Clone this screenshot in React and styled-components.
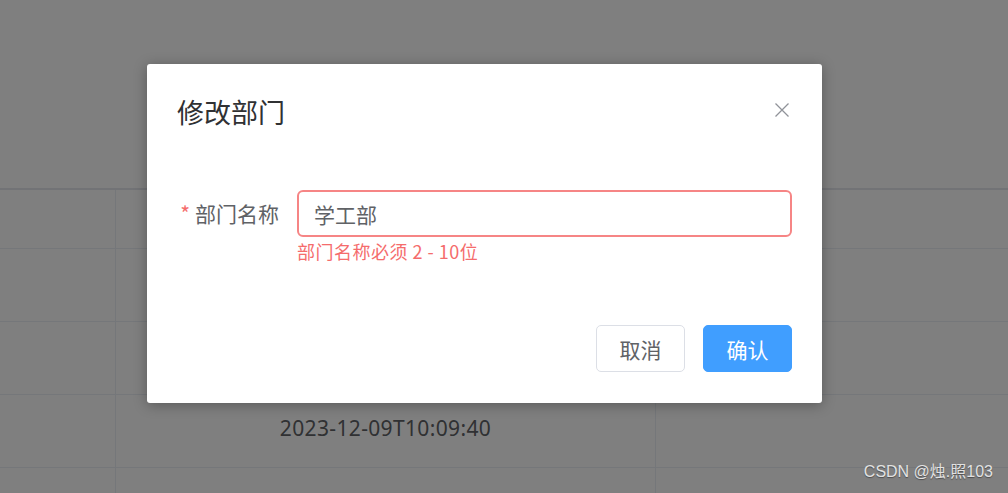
import styled, { createGlobalStyle } from "styled-components";

const GlobalStyle = createGlobalStyle`
  html, body {
    margin: 0;
    padding: 0;
    background: #fff;
    font-family: "Noto Sans CJK SC", "Noto Sans", sans-serif;
  }
`;

const Page = styled.div`
  width: 1008px;
  height: 493px;
  overflow: hidden;
  position: relative;
  background: #fff;
`;

const Toolbar = styled.div`
  height: 188px;
`;

const Table = styled.div`
  border-top: 2px solid #e4e7ed;
`;

const Row = styled.div`
  display: grid;
  grid-template-columns: 116px 540px 1fr;
  height: ${(p) => p.$h}px;
  border-bottom: 1px solid #ebeef5;
  box-sizing: border-box;
`;

const Cell = styled.div`
  display: flex;
  align-items: center;
  justify-content: center;
  padding-bottom: 6px;
  border-right: ${(p) => (p.$last ? "none" : "1px solid #ebeef5")};
  color: #606266;
  font-size: 21px;
  letter-spacing: 0.35px;
  font-family: "Noto Sans", "Noto Sans CJK SC", sans-serif;
`;

const Overlay = styled.div`
  position: absolute;
  inset: 0;
  background: rgba(0, 0, 0, 0.5);
  padding: 64px 0 0 147px;
`;

const Dialog = styled.div`
  position: relative;
  width: 675px;
  background: #fff;
  border-radius: 3px;
  box-shadow: 0 2px 14px rgba(0, 0, 0, 0.3);
`;

const Header = styled.div`
  padding: 30px 30px 15px;
`;

const Title = styled.span`
  font-size: 27px;
  line-height: 36px;
  color: #303133;
  display: block;
`;

const Close = styled.button`
  position: absolute;
  top: 39px;
  right: 33px;
  width: 14px;
  height: 14px;
  padding: 0;
  border: none;
  background: none;
  display: flex;
`;

const Body = styled.div`
  padding: 45px 30px;
`;

const FormItem = styled.div`
  display: flex;
  margin-bottom: 33px;
`;

const Label = styled.label`
  width: 120px;
  box-sizing: border-box;
  padding-right: 18px;
  text-align: right;
  font-size: 21px;
  line-height: 47px;
  color: #606266;
`;

const Star = styled.span`
  color: #f56c6c;
  margin-right: 5px;
`;

const Content = styled.div`
  flex: 1;
  position: relative;
`;

const Input = styled.input`
  width: 100%;
  height: 47px;
  box-sizing: border-box;
  border: 2px solid #f68585;
  border-radius: 6px;
  padding: 0 15px;
  font-family: inherit;
  font-size: 21px;
  color: #606266;
  outline: none;
`;

const Error = styled.div`
  position: absolute;
  top: 100%;
  left: 0;
  padding-top: 5px;
  font-size: 18px;
  line-height: 18px;
  letter-spacing: 0.5px;
  color: #f56c6c;
`;

const Footer = styled.div`
  display: flex;
  justify-content: flex-end;
  gap: 18px;
  padding: 10px 30px 31px;
`;

const Button = styled.button`
  height: 47px;
  padding: 0 22.5px;
  border-radius: 5px;
  font-family: inherit;
  font-size: 21px;
  border: 1px solid ${(p) => (p.$primary ? "#409eff" : "#dcdfe6")};
  background: ${(p) => (p.$primary ? "#409eff" : "#fff")};
  color: ${(p) => (p.$primary ? "#fff" : "#606266")};
`;

const Watermark = styled.div`
  position: absolute;
  right: 15px;
  bottom: 11px;
  font-family: "Liberation Sans", "Noto Sans CJK SC", sans-serif;
  font-size: 16px;
  color: #e2e2e2;
  text-shadow: 0 1px 1px rgba(0, 0, 0, 0.4);
`;

const rows = [59, 73, 73, 73, 73];

export default function App() {
  return (
    <>
      <GlobalStyle />
      <Page>
        <Toolbar />
        <Table>
          {rows.map((h, i) => (
            <Row key={i} $h={h}>
              <Cell />
              <Cell>{i === 3 ? "2023-12-09T10:09:40" : ""}</Cell>
              <Cell $last />
            </Row>
          ))}
        </Table>
        <Overlay>
          <Dialog>
            <Header>
              <Title>修改部门</Title>
            </Header>
            <Close aria-label="close">
              <svg width="14" height="14" viewBox="0 0 14 14">
                <path d="M0.5 0.5L13.5 13.5M13.5 0.5L0.5 13.5" stroke="#909399" strokeWidth="1.3" />
              </svg>
            </Close>
            <Body>
              <FormItem>
                <Label>
                  <Star>*</Star>部门名称
                </Label>
                <Content>
                  <Input defaultValue="学工部" />
                  <Error>部门名称必须 2 - 10位</Error>
                </Content>
              </FormItem>
            </Body>
            <Footer>
              <Button>取消</Button>
              <Button $primary>确认</Button>
            </Footer>
          </Dialog>
        </Overlay>
        <Watermark>CSDN @烛.照103</Watermark>
      </Page>
    </>
  );
}
